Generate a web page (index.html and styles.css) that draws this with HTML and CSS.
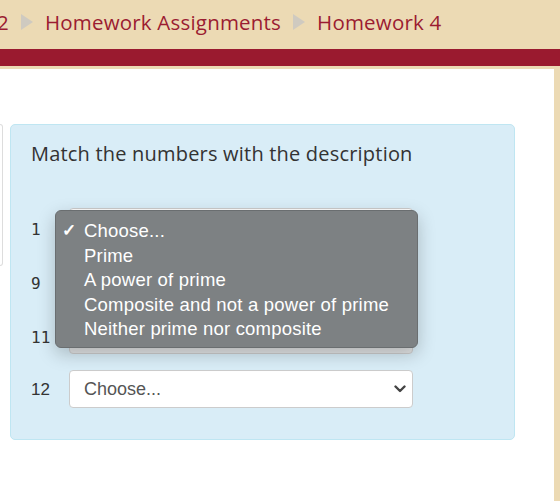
FILE: index.html
```html
<!DOCTYPE html>
<html lang="en">
<head>
<meta charset="UTF-8" />
<meta name="viewport" content="width=device-width, initial-scale=1" />
<title>Homework 4</title>
<link rel="stylesheet" href="styles.css">
</head>
<body>

<div class="crumbs">
  <span class="crumb cut">2</span>
  <span class="sep"></span>
  <a class="crumb" href="#">Homework Assignments</a>
  <span class="sep"></span>
  <a class="crumb" href="#">Homework 4</a>
</div>
<div class="redbar"></div>

<div class="page">
  <div class="side-card"></div>

  <div class="question">
    <p class="prompt">Match the numbers with the description</p>

    <div class="rows">
      <div class="row open">
        <span class="num mono">1</span>
        <div class="picker">
          <div class="fake-select">
            <span>Choose...</span>
            <svg class="chev" width="12" height="8" viewBox="0 0 12 8"><path d="M1.5 1.5 L6 6 L10.5 1.5" fill="none" stroke="#444" stroke-width="2.4" stroke-linecap="round" stroke-linejoin="round"/></svg>
          </div>
          <!-- open dropdown of the first select -->
          <ul class="menu">
            <li class="checked">Choose...</li>
            <li>Prime</li>
            <li>A power of prime</li>
            <li>Composite and not a power of prime</li>
            <li>Neither prime nor composite</li>
          </ul>
        </div>
      </div>

      <div class="row">
        <span class="num mono">9</span>
        <div class="picker">
          <div class="fake-select">
            <span>Choose...</span>
            <svg class="chev" width="12" height="8" viewBox="0 0 12 8"><path d="M1.5 1.5 L6 6 L10.5 1.5" fill="none" stroke="#444" stroke-width="2.4" stroke-linecap="round" stroke-linejoin="round"/></svg>
          </div>
        </div>
      </div>

      <div class="row">
        <span class="num mono">11</span>
        <div class="picker">
          <div class="fake-select shaded">
            <span>Choose...</span>
            <svg class="chev" width="12" height="8" viewBox="0 0 12 8"><path d="M1.5 1.5 L6 6 L10.5 1.5" fill="none" stroke="#444" stroke-width="2.4" stroke-linecap="round" stroke-linejoin="round"/></svg>
          </div>
        </div>
      </div>

      <div class="row">
        <span class="num">12</span>
        <div class="picker">
          <div class="fake-select">
            <span>Choose...</span>
            <svg class="chev" width="12" height="8" viewBox="0 0 12 8"><path d="M1.5 1.5 L6 6 L10.5 1.5" fill="none" stroke="#444" stroke-width="2.4" stroke-linecap="round" stroke-linejoin="round"/></svg>
          </div>
        </div>
      </div>
    </div>
  </div>
</div>

</body>
</html>
```

FILE: styles.css
```css
html, body {
  height: 100%;
}
body {
  margin: 0;
  background: #ecdab4;
  font-family: 'Open Sans', 'Liberation Sans', sans-serif;
  color: #333;
  display: flex;
  flex-direction: column;
  overflow: hidden;
}
.crumbs {
  height: 49px;
  box-sizing: border-box;
  padding-bottom: 5px;
  display: flex;
  align-items: center;
  gap: 12px;
  margin-left: -3px;
  font-size: 20.5px;
  letter-spacing: 0.2px;
  white-space: nowrap;
  flex-shrink: 0;
}
.crumb {
  color: #9b1c31;
  text-decoration: none;
}
.sep {
  width: 0;
  height: 0;
  border-top: 8px solid transparent;
  border-bottom: 8px solid transparent;
  border-left: 12px solid #cfcac0;
}
.redbar {
  height: 17px;
  background: #9a1a2f;
  margin-bottom: 3px;
  flex-shrink: 0;
}
.page {
  flex: 1;
  background: #fff;
  margin-right: 6px;
  display: flex;
  align-items: flex-start;
  padding-top: 55px;
}
.side-card {
  width: 2px;
  height: 140px;
  border: 1px solid #ddd;
  border-left: none;
  border-radius: 0 4px 4px 0;
  margin-right: 7px;
}
.question {
  width: 463px;
  background: #d9edf7;
  border: 1px solid #bfe6f2;
  border-radius: 5px;
  padding: 15px 20px 31px 20px;
}
.prompt {
  margin: 0 0 40px;
  font-size: 20px;
  line-height: 28px;
  letter-spacing: 0.2px;
}
.rows {
  display: flex;
  flex-direction: column;
  gap: 16px;
}
.row {
  display: flex;
  align-items: center;
  height: 38px;
}
.row.open {
  position: relative;
  z-index: 2;
}
.num {
  width: 38px;
  padding-top: 2px;
  font-family: 'Liberation Sans', sans-serif;
  font-size: 17px;
  color: #333;
}
.num.mono {
  padding-top: 4px;
  font-family: 'DejaVu Sans Mono', monospace;
  font-size: 16px;
}
.picker {
  position: relative;
}
.fake-select {
  width: 322px;
  height: 36px;
  box-sizing: content-box;
  background: #fff;
  border: 1px solid #ccc;
  border-radius: 4px;
  padding: 0 6px 0 14px;
  display: flex;
  align-items: center;
  justify-content: space-between;
  font-family: 'Liberation Sans', sans-serif;
  font-size: 18px;
  color: #555;
}
.fake-select.shaded {
  background: #e2e4e5;
}
.menu {
  position: absolute;
  left: -14px;
  top: 2px;
  width: 361px;
  height: 128px;
  margin: 0;
  padding: 8px 0 0;
  box-sizing: content-box;
  list-style: none;
  background: #7d8183;
  border: 1px solid #6a6e70;
  border-radius: 6px;
  box-shadow: 0 6px 18px rgba(0, 0, 0, 0.22);
  font-family: 'Liberation Sans', sans-serif;
  font-size: 18.5px;
  letter-spacing: 0.2px;
  color: #fff;
}
.menu li {
  height: 24.6px;
  line-height: 24.6px;
  padding-left: 28px;
  position: relative;
}
.menu li.checked::before {
  content: '\2713';
  position: absolute;
  left: 6px;
  font-size: 17px;
  font-weight: bold;
}
```
